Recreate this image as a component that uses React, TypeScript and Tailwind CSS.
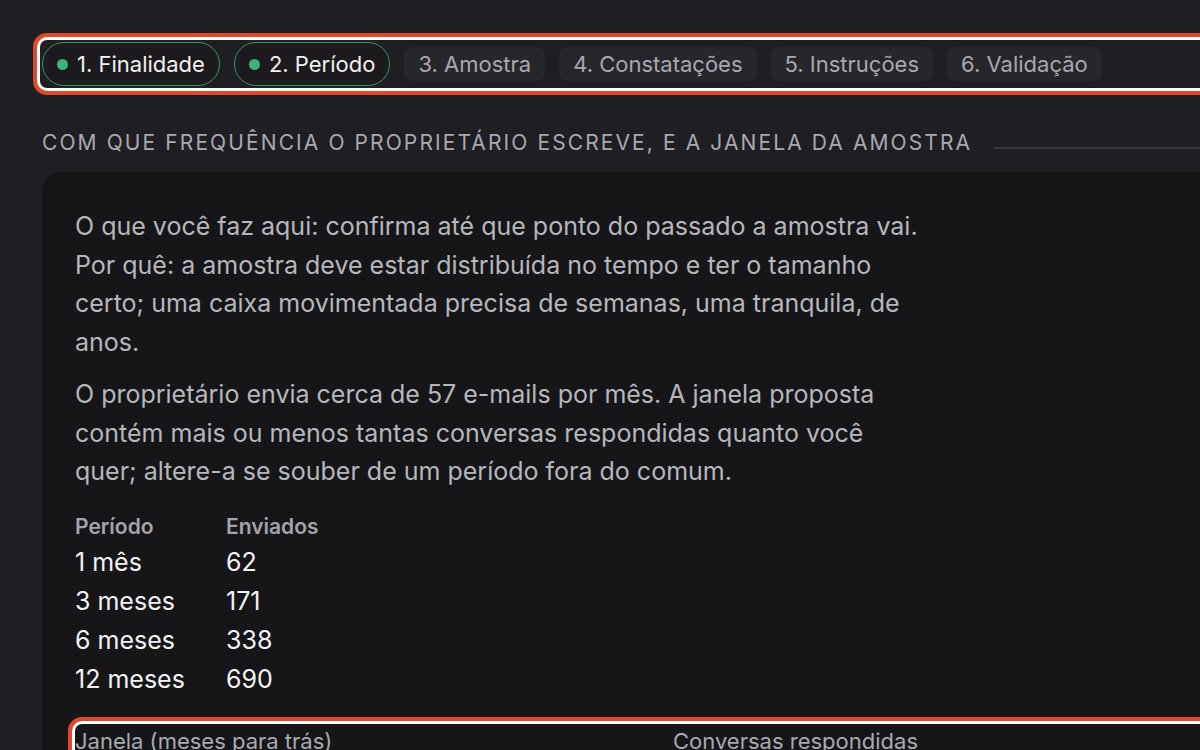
import { Fragment } from "react";

const steps = [
  { label: "1. Finalidade", done: true },
  { label: "2. Período", done: true },
  { label: "3. Amostra", done: false },
  { label: "4. Constatações", done: false },
  { label: "5. Instruções", done: false },
  { label: "6. Validação", done: false },
];

const rows = [
  { period: "1 mês", sent: 62 },
  { period: "3 meses", sent: 171 },
  { period: "6 meses", sent: 338 },
  { period: "12 meses", sent: 690 },
];

// annotation frame drawn over the highlighted block
function Highlight({ className }: { className: string }) {
  return (
    <div className={`pointer-events-none absolute rounded-[14px] border-[4px] border-[#e04a2b] ${className}`}>
      <div className="h-full w-full rounded-[10px] border-[3px] border-white" />
    </div>
  );
}

export default function App() {
  return (
    <div
      className="h-[750px] w-[1200px] overflow-hidden bg-[#1f1f23] pl-[42px] pt-[42px] text-[#b6b6bd]"
      style={{ fontFamily: "Inter, 'Noto Sans', sans-serif" }}
    >
      <div className="w-[1240px]">
        {/* Steps */}
        <div className="relative flex items-center gap-[14px]">
          {steps.map((s) =>
            s.done ? (
              <div
                key={s.label}
                className="flex h-[44px] items-center gap-[9px] rounded-full border border-[#3f8f6a] bg-[#1c1a1c] px-[14px] text-[22px] text-[#f1f1f3]"
              >
                <span className="h-[11px] w-[11px] rounded-full bg-[#3db37c]" />
                {s.label}
              </div>
            ) : (
              <div
                key={s.label}
                className="flex h-[34px] items-center rounded-[8px] bg-[#27272b] px-[14px] text-[22px] text-[#a8a8b0]"
              >
                {s.label}
              </div>
            )
          )}
          <Highlight className="-left-[9px] -top-[9px] h-[62px] w-[1300px]" />
        </div>

        {/* Section heading */}
        <div className="mt-[43px] flex items-center gap-[22px]">
          <h2 className="text-[21px] leading-[28px] tracking-[0.1em] text-[#a9a9b1] whitespace-nowrap">
            COM QUE FREQUÊNCIA O PROPRIETÁRIO ESCREVE, E A JANELA DA AMOSTRA
          </h2>
          <div className="mt-[10px] h-[2px] flex-1 bg-[#38383e]" />
        </div>

        {/* Card */}
        <div className="mt-[15px] rounded-[18px] bg-[#161618] pl-[33px] pt-[35px] pb-[40px]">
          <div className="max-w-[850px] space-y-[14px] text-[25px] leading-[38.5px]">
            <p>
              O que você faz aqui: confirma até que ponto do passado a amostra vai. Por quê: a
              amostra deve estar distribuída no tempo e ter o tamanho certo; uma caixa
              movimentada precisa de semanas, uma tranquila, de anos.
            </p>
            <p>
              O proprietário envia cerca de 57 e-mails por mês. A janela proposta contém mais ou
              menos tantas conversas respondidas quanto você quer; altere-a se souber de um
              período fora do comum.
            </p>
          </div>

          <div className="mt-[20px] grid w-fit grid-cols-[151px_auto]">
            <div className="text-[21px] font-semibold leading-[32px] text-[#a3a3ab]">Período</div>
            <div className="text-[21px] font-semibold leading-[32px] text-[#a3a3ab]">Enviados</div>
            {rows.map((r) => (
              <Fragment key={r.period}>
                <div className="text-[25px] leading-[39px] text-[#f2f2f4]">{r.period}</div>
                <div className="text-[25px] leading-[39px] text-[#f2f2f4]">{r.sent}</div>
              </Fragment>
            ))}
          </div>

          {/* Window form */}
          <div className="relative mt-[22px] grid grid-cols-[598px_1fr] pt-[6px]">
            <label className="text-[22px] leading-[28px] text-[#a9a9b1]">Janela (meses para trás)</label>
            <label className="text-[22px] leading-[28px] text-[#a9a9b1]">Conversas respondidas</label>
            <Highlight className="-left-[7px] -top-[4px] h-[120px] w-[1200px]" />
          </div>
        </div>
      </div>
    </div>
  );
}
